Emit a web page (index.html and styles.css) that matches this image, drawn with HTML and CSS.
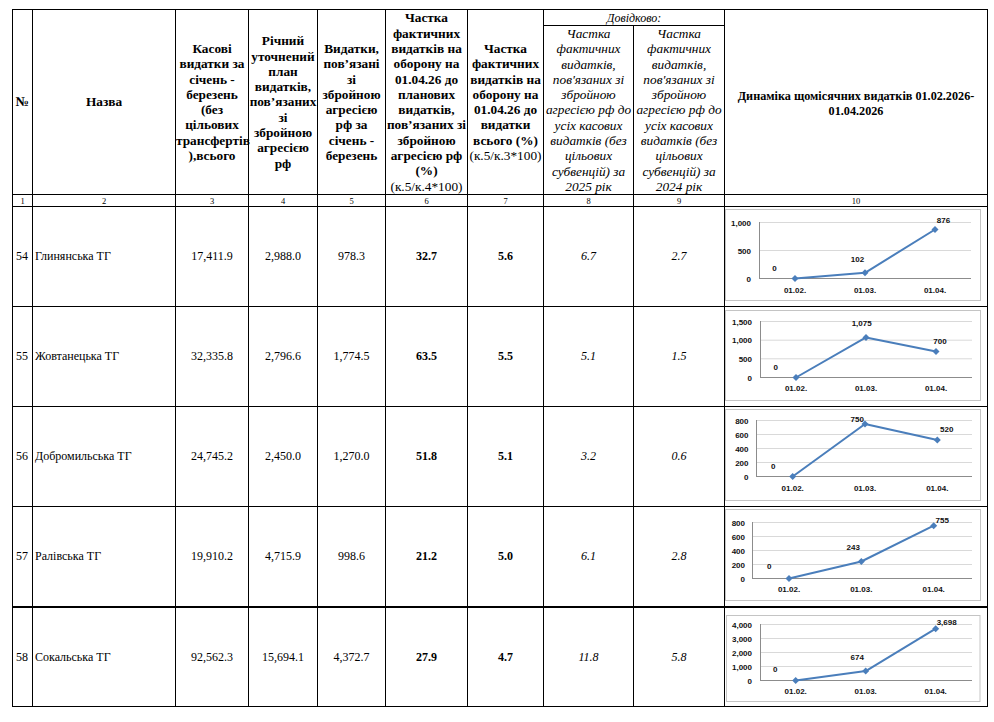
FILE: index.html
```html
<!DOCTYPE html>
<html lang="uk">
<head>
<meta charset="utf-8">
<title>Динаміка видатків</title>
<link rel="stylesheet" href="styles.css">
</head>
<body>
<div class="sheet">
<table class="report">
<colgroup>
<col class="w1"><col class="w2"><col class="w3"><col class="w4"><col class="w5">
<col class="w6"><col class="w7"><col class="w8"><col class="w9"><col class="w10">
</colgroup>
<thead>
<tr class="h1">
<th rowspan="2">№</th>
<th rowspan="2">Назва</th>
<th rowspan="2">Касові<br>видатки за<br>січень -<br>березень<br>(без<br>цільових<br>трансфертів<br>),всього</th>
<th rowspan="2">Річний<br>уточнений<br>план<br>видатків,<br>пов’язаних<br>зі<br>збройною<br>агресією<br>рф</th>
<th rowspan="2">Видатки,<br>пов’язані<br>зі<br>збройною<br>агресією<br>рф за<br>січень -<br>березень</th>
<th rowspan="2">Частка<br>фактичних<br>видатків на<br>оборону на<br>01.04.26 до<br>планових<br>видатків,<br>пов’язаних зі<br>збройною<br>агресією рф<br>(%)<br><span class="formula">(к.5/к.4*100)</span></th>
<th rowspan="2">Частка<br>фактичних<br>видатків на<br>оборону на<br>01.04.26 до<br>видатки<br>всього (%)<br><span class="formula">(к.5/к.3*100)</span></th>
<th colspan="2" class="ref">Довідково:</th>
<th rowspan="2" class="dyn">Динаміка щомісячних видатків 01.02.2026-<br>01.04.2026</th>
</tr>
<tr class="h2">
<th class="it">Частка<br>фактичних<br>видатків,<br>пов'язаних зі<br>збройною<br>агресією рф до<br>усіх касових<br>видатків (без<br>цільових<br>субвенцій) за<br>2025 рік</th>
<th class="it">Частка<br>фактичних<br>видатків,<br>пов'язаних зі<br>збройною<br>агресією рф до<br>усіх касових<br>видатків (без<br>цільових<br>субвенцій) за<br>2024 рік</th>
</tr>
<tr class="nums">
<td>1</td><td>2</td><td>3</td><td>4</td><td>5</td><td>6</td><td>7</td><td>8</td><td>9</td><td>10</td>
</tr>
</thead>
<tbody>
<tr class="row">
<td class="no">54</td><td class="name">Глинянська ТГ</td>
<td>17,411.9</td><td>2,988.0</td><td>978.3</td>
<td class="b">32.7</td><td class="b">5.6</td><td class="i">6.7</td><td class="i">2.7</td>
<td class="chartcell">
<svg class="chart" width="262" height="98" viewBox="0 0 262 98">
<rect class="frame" x="0.5" y="2.5" width="255" height="91"/>
<line class="grid" x1="34" y1="15.5" x2="246" y2="15.5"/>
<line class="grid" x1="34" y1="43.5" x2="246" y2="43.5"/>
<line class="axis" x1="34" y1="71.5" x2="246" y2="71.5"/>
<line class="axis" x1="34.5" y1="15" x2="34.5" y2="71.5"/>
<g class="ylab"><text x="26" y="18.5">1,000</text><text x="26" y="46.5">500</text><text x="26" y="74.5">0</text></g>
<g class="xlab"><text x="70" y="86">01.02.</text><text x="140" y="86">01.03.</text><text x="210" y="86">01.04.</text></g>
<polyline class="series" points="70,71.5 140,65.8 210,22.5"/>
<g class="marker"><polygon points="70,68 73.5,71.5 70,75 66.5,71.5"/><polygon points="140,62.3 143.5,65.8 140,69.3 136.5,65.8"/><polygon points="210,19 213.5,22.5 210,26 206.5,22.5"/></g>
<g class="dlab"><text x="49.5" y="63.5">0</text><text x="132.5" y="54.5">102</text><text x="218.5" y="16">876</text></g>
</svg>
</td>
</tr>
<tr class="row">
<td class="no">55</td><td class="name">Жовтанецька ТГ</td>
<td>32,335.8</td><td>2,796.6</td><td>1,774.5</td>
<td class="b">63.5</td><td class="b">5.5</td><td class="i">5.1</td><td class="i">1.5</td>
<td class="chartcell">
<svg class="chart" width="262" height="98" viewBox="0 0 262 98">
<rect class="frame" x="0.5" y="3.5" width="255" height="90"/>
<line class="grid" x1="35" y1="14.5" x2="247" y2="14.5"/>
<line class="grid" x1="35" y1="33.2" x2="247" y2="33.2"/>
<line class="grid" x1="35" y1="51.8" x2="247" y2="51.8"/>
<line class="axis" x1="35" y1="70.5" x2="247" y2="70.5"/>
<line class="axis" x1="35.5" y1="14" x2="35.5" y2="70.5"/>
<g class="ylab"><text x="27" y="17.5">1,500</text><text x="27" y="36.2">1,000</text><text x="27" y="54.8">500</text><text x="27" y="73.5">0</text></g>
<g class="xlab"><text x="71" y="84.3">01.02.</text><text x="141" y="84.3">01.03.</text><text x="211" y="84.3">01.04.</text></g>
<polyline class="series" points="71,70.5 141,30.4 211,44.4"/>
<g class="marker"><polygon points="71,67 74.5,70.5 71,74 67.5,70.5"/><polygon points="141,26.9 144.5,30.4 141,33.9 137.5,30.4"/><polygon points="211,40.9 214.5,44.4 211,47.9 207.5,44.4"/></g>
<g class="dlab"><text x="50.7" y="62.7">0</text><text x="136.7" y="19.3">1,075</text><text x="215" y="37">700</text></g>
</svg>
</td>
</tr>
<tr class="row">
<td class="no">56</td><td class="name">Добромильська ТГ</td>
<td>24,745.2</td><td>2,450.0</td><td>1,270.0</td>
<td class="b">51.8</td><td class="b">5.1</td><td class="i">3.2</td><td class="i">0.6</td>
<td class="chartcell">
<svg class="chart" width="262" height="98" viewBox="0 0 262 98">
<rect class="frame" x="0.5" y="2.5" width="255" height="91"/>
<line class="grid" x1="31" y1="13.5" x2="247" y2="13.5"/>
<line class="grid" x1="31" y1="27.5" x2="247" y2="27.5"/>
<line class="grid" x1="31" y1="41.5" x2="247" y2="41.5"/>
<line class="grid" x1="31" y1="55.5" x2="247" y2="55.5"/>
<line class="axis" x1="31" y1="69.5" x2="247" y2="69.5"/>
<line class="axis" x1="31.5" y1="13" x2="31.5" y2="69.5"/>
<g class="ylab"><text x="23.5" y="16.5">800</text><text x="23.5" y="30.5">600</text><text x="23.5" y="44.5">400</text><text x="23.5" y="58.5">200</text><text x="23.5" y="72.5">0</text></g>
<g class="xlab"><text x="67.7" y="84.3">01.02.</text><text x="140" y="84.3">01.03.</text><text x="212.3" y="84.3">01.04.</text></g>
<polyline class="series" points="67.7,69.5 140,17 212.3,33.1"/>
<g class="marker"><polygon points="67.7,66 71.2,69.5 67.7,73 64.2,69.5"/><polygon points="140,13.5 143.5,17 140,20.5 136.5,17"/><polygon points="212.3,29.6 215.8,33.1 212.3,36.6 208.8,33.1"/></g>
<g class="dlab"><text x="48.3" y="61.7">0</text><text x="132.3" y="15">750</text><text x="221.7" y="25.3">520</text></g>
</svg>
</td>
</tr>
<tr class="row">
<td class="no">57</td><td class="name">Ралівська ТГ</td>
<td>19,910.2</td><td>4,715.9</td><td>998.6</td>
<td class="b">21.2</td><td class="b">5.0</td><td class="i">6.1</td><td class="i">2.8</td>
<td class="chartcell">
<svg class="chart" width="262" height="98" viewBox="0 0 262 98">
<rect class="frame" x="0.5" y="2.5" width="255" height="91"/>
<line class="grid" x1="27" y1="15.5" x2="247" y2="15.5"/>
<line class="grid" x1="27" y1="29.5" x2="247" y2="29.5"/>
<line class="grid" x1="27" y1="43.5" x2="247" y2="43.5"/>
<line class="grid" x1="27" y1="57.5" x2="247" y2="57.5"/>
<line class="axis" x1="27" y1="71.5" x2="247" y2="71.5"/>
<line class="axis" x1="27.5" y1="15" x2="27.5" y2="71.5"/>
<g class="ylab"><text x="20" y="18.5">800</text><text x="20" y="32.5">600</text><text x="20" y="46.5">400</text><text x="20" y="60.5">200</text><text x="20" y="74.5">0</text></g>
<g class="xlab"><text x="64" y="85">01.02.</text><text x="136.3" y="85">01.03.</text><text x="208.7" y="85">01.04.</text></g>
<polyline class="series" points="64,71.5 136.3,54.5 208.7,18.7"/>
<g class="marker"><polygon points="64,68 67.5,71.5 64,75 60.5,71.5"/><polygon points="136.3,51 139.8,54.5 136.3,58 132.8,54.5"/><polygon points="208.7,15.2 212.2,18.7 208.7,22.2 205.2,18.7"/></g>
<g class="dlab"><text x="44.3" y="62">0</text><text x="128.3" y="42.7">243</text><text x="217.3" y="16">755</text></g>
</svg>
</td>
</tr>
<tr class="row last">
<td class="no">58</td><td class="name">Сокальська ТГ</td>
<td>92,562.3</td><td>15,694.1</td><td>4,372.7</td>
<td class="b">27.9</td><td class="b">4.7</td><td class="i">11.8</td><td class="i">5.8</td>
<td class="chartcell">
<svg class="chart" width="262" height="98" viewBox="0 0 262 98">
<rect class="frame" x="1.5" y="7.5" width="253.5" height="86"/>
<line class="grid" x1="35" y1="16.5" x2="247" y2="16.5"/>
<line class="grid" x1="35" y1="30.5" x2="247" y2="30.5"/>
<line class="grid" x1="35" y1="44.5" x2="247" y2="44.5"/>
<line class="grid" x1="35" y1="58.5" x2="247" y2="58.5"/>
<line class="axis" x1="35" y1="72.5" x2="247" y2="72.5"/>
<line class="axis" x1="35.5" y1="16" x2="35.5" y2="72.5"/>
<g class="ylab"><text x="27" y="19.5">4,000</text><text x="27" y="33.5">3,000</text><text x="27" y="47.5">2,000</text><text x="27" y="61.5">1,000</text><text x="27" y="75.5">0</text></g>
<g class="xlab"><text x="70.7" y="86">01.02.</text><text x="140.7" y="86">01.03.</text><text x="210.7" y="86">01.04.</text></g>
<polyline class="series" points="70.7,72.5 140.7,63.1 210.7,20.7"/>
<g class="marker"><polygon points="70.7,69 74.2,72.5 70.7,76 67.2,72.5"/><polygon points="140.7,59.6 144.2,63.1 140.7,66.6 137.2,63.1"/><polygon points="210.7,17.2 214.2,20.7 210.7,24.2 207.2,20.7"/></g>
<g class="dlab"><text x="50.3" y="63.7">0</text><text x="132.3" y="51.7">674</text><text x="221.7" y="16.7">3,698</text></g>
</svg>
</td>
</tr>
</tbody>
</table>
</div>
</body>
</html>
```

FILE: styles.css
```css
html, body {
  margin: 0;
  padding: 0;
  background: #ffffff;
}

body {
  font-family: "Liberation Serif", "Times New Roman", serif;
  color: #000;
}

.sheet {
  padding: 9px 0 0 12px;
}

.report {
  border-collapse: collapse;
  table-layout: fixed;
  width: 975px;
}

.w1 { width: 20px; }
.w2 { width: 143px; }
.w3 { width: 73px; }
.w4 { width: 69px; }
.w5 { width: 68px; }
.w6 { width: 82px; }
.w7 { width: 76px; }
.w8 { width: 90px; }
.w9 { width: 91px; }
.w10 { width: 263px; }

.report th,
.report td {
  border: 1px solid #000;
  padding: 0;
}

.report th {
  font-size: 13.3px;
  line-height: 15.3px;
  font-weight: bold;
  text-align: center;
  vertical-align: middle;
  white-space: nowrap;
}

.report th .formula {
  font-weight: normal;
}

.report th.it {
  font-weight: normal;
  font-style: italic;
}

.report th.ref {
  font-weight: normal;
  font-style: italic;
  font-size: 12px;
  line-height: 14px;
}

.report th.dyn {
  font-size: 12.2px;
  line-height: 15.3px;
  padding-top: 4px;
}

.h1 { height: 16px; }
.h2 { height: 169px; }

.nums { height: 12px; }
.nums td {
  font-size: 8.5px;
  line-height: 10px;
  text-align: center;
  vertical-align: middle;
}

.row { height: 100px; }
.row td {
  font-size: 12px;
  text-align: center;
  vertical-align: middle;
}

.row td.no {
  text-align: left;
  padding-left: 3px;
}

.row td.name {
  text-align: left;
  padding-left: 2px;
}

.row td.b { font-weight: bold; }
.row td.i { font-style: italic; }

.row.last td {
  border-top: 2px solid #000;
}

.row td.chartcell {
  vertical-align: top;
  text-align: left;
}

.chart {
  display: block;
  font-family: "Liberation Sans", Arial, sans-serif;
  font-size: 8px;
  font-weight: bold;
}

.chart .frame {
  fill: #fff;
  stroke: #c4c4c4;
  stroke-width: 1;
}

.chart .grid {
  stroke: #d9d9d9;
  stroke-width: 1;
}

.chart .axis {
  stroke: #8c8c8c;
  stroke-width: 1;
}

.chart text {
  fill: #111;
}

.chart .ylab text { text-anchor: end; }
.chart .xlab text { text-anchor: middle; }
.chart .dlab text { text-anchor: middle; }

.chart .series {
  fill: none;
  stroke: #4a7ebb;
  stroke-width: 2;
  stroke-linejoin: round;
}

.chart .marker polygon {
  fill: #4a7ebb;
}
```
